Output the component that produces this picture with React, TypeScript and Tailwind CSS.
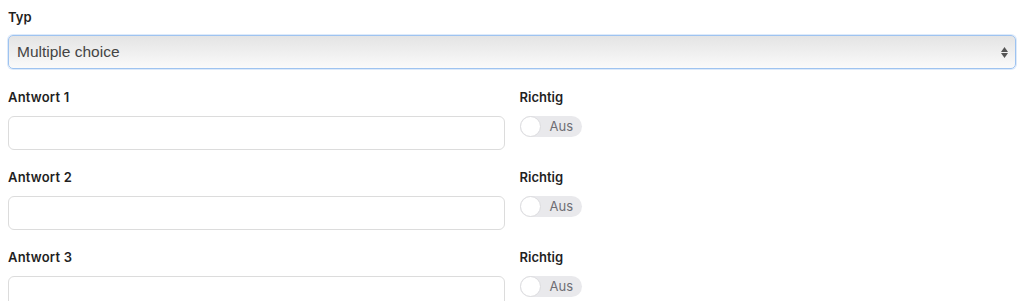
import { FC } from 'react';

const font = { fontFamily: 'Inter, "Liberation Sans", sans-serif' };

const Toggle: FC = () => (
  <div className="flex items-center w-[62px] h-[21px] rounded-full bg-[#e9e9ec]">
    <span className="w-[21px] h-[21px] rounded-full bg-white border border-[#dcdcdf] shrink-0" />
    <span className="ml-[9px] text-[13px] text-[#6e6e73]">Aus</span>
  </div>
);

const AnswerRow: FC<{ n: number }> = ({ n }) => (
  <div className="grid grid-cols-2 gap-x-[15px]">
    <div>
      <label className="block text-[13px] font-semibold text-[#1f1f1f] leading-[20px] tracking-[0.2px] mb-[9px]">Antwort {n}</label>
      <input className="block w-full h-[34px] rounded-[6px] border border-[#dcdcdc] bg-white" />
    </div>
    <div>
      <label className="block text-[13px] font-semibold text-[#1f1f1f] leading-[20px] mb-[9px]">Richtig</label>
      <Toggle />
    </div>
  </div>
);

export default function App() {
  return (
    <div className="bg-white w-[1024px] h-[301px] overflow-hidden px-2 pt-[7px]" style={font}>
      <label className="block text-[13px] font-semibold text-[#1f1f1f] leading-[20px] mb-[8px]">Typ</label>
      <div className="relative h-[34px] rounded-[5px] border border-[#9ec3f0] bg-gradient-to-b from-[#e4e4e4] to-[#fafafa] flex items-center pl-[8px] shadow-[0_0_0_1px_rgba(158,195,240,0.35)]">
        <span className="text-[15.5px] text-[#444]" style={{ fontFamily: '"Liberation Sans", Arial, sans-serif' }}>Multiple choice</span>
        <span className="ml-auto mr-[7px] flex flex-col items-center gap-[1px]">
          <svg width="7" height="5" viewBox="0 0 7 5"><path d="M3.5 0L7 5H0z" fill="#555" /></svg>
          <svg width="7" height="5" viewBox="0 0 7 5"><path d="M0 0h7L3.5 5z" fill="#555" /></svg>
        </span>
      </div>
      <div className="mt-[18px] flex flex-col gap-[17px]">
        {[1, 2, 3].map(n => (
          <AnswerRow key={n} n={n} />
        ))}
      </div>
    </div>
  );
}
